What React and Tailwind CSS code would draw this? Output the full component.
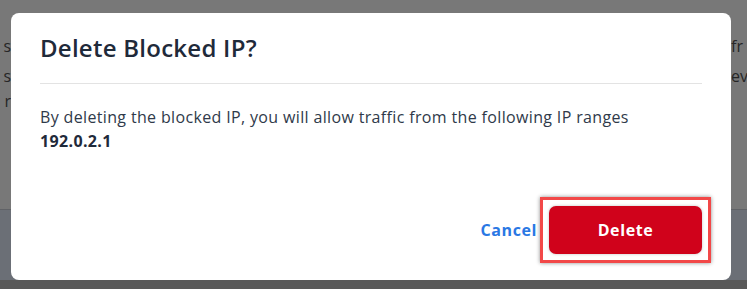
import React from "react";

const DeleteBlockedIpModal = () => {
  return (
    <div className="absolute left-[11px] top-[13px] w-[720px] h-[267px] bg-white rounded-[8px] flex flex-col">
      {/* Header */}
      <div className="mx-[29px] pt-[19px] pb-[19px] border-b border-[#e3e3e3]">
        <h2 className="text-[24px] leading-[32px] font-semibold tracking-[0.25px] text-[#1f2a3a]">Delete Blocked IP?</h2>
      </div>

      {/* Body */}
      <div className="mx-[29px] pt-[21px] text-[16px] leading-[24px] tracking-[0.35px] text-[#2f3a4a]">
        <p>By deleting the blocked IP, you will allow traffic from the following IP ranges</p>
        <p className="font-bold text-[#1f2a3a]">192.0.2.1</p>
      </div>

      {/* Footer */}
      <div className="mt-auto pr-[20px] pb-[17px] flex justify-end items-center gap-[3px]">
        <button className="text-[16px] font-bold tracking-[0.6px] text-[#2a78e4]">Cancel</button>
        <div className="border-[3px] border-[#f24848] p-[6px] shadow-[0_0_4px_rgba(0,0,0,0.45)]">
          <button className="w-[153px] h-[48px] rounded-[7px] bg-[#d0021b] text-white text-[16px] font-bold tracking-[0.6px] shadow-[0_0_3px_rgba(0,0,0,0.25)]">
            Delete
          </button>
        </div>
      </div>
    </div>
  );
};

export default function App() {
  return (
    <div
      className="relative w-[747px] h-[289px] overflow-hidden bg-[#787878]"
      style={{ fontFamily: '"Open Sans", "Noto Sans", sans-serif' }}
    >
      {/* Dimmed page behind the overlay */}
      <div className="flex flex-col h-full">
        <div className="h-[209px] flex justify-between text-[16px] text-[#262626]">
          <div className="w-[11px] overflow-hidden flex flex-col items-end">
            <span className="mt-[36px] leading-[20px]">s</span>
            <span className="mt-[10px] leading-[20px]">s</span>
            <span className="mt-[5px] leading-[20px]">r</span>
          </div>
          <div className="w-[16px] overflow-hidden flex flex-col">
            <span className="mt-[36px] leading-[20px] whitespace-nowrap">fr</span>
            <span className="mt-[10px] leading-[20px] whitespace-nowrap">ev</span>
          </div>
        </div>
        <div className="h-[1px] bg-[#606266]" />
        <div className="h-[70px] bg-[#6b6f76]" />
        <div className="flex-1 bg-[#595959]" />
      </div>

      <DeleteBlockedIpModal />
    </div>
  );
}
